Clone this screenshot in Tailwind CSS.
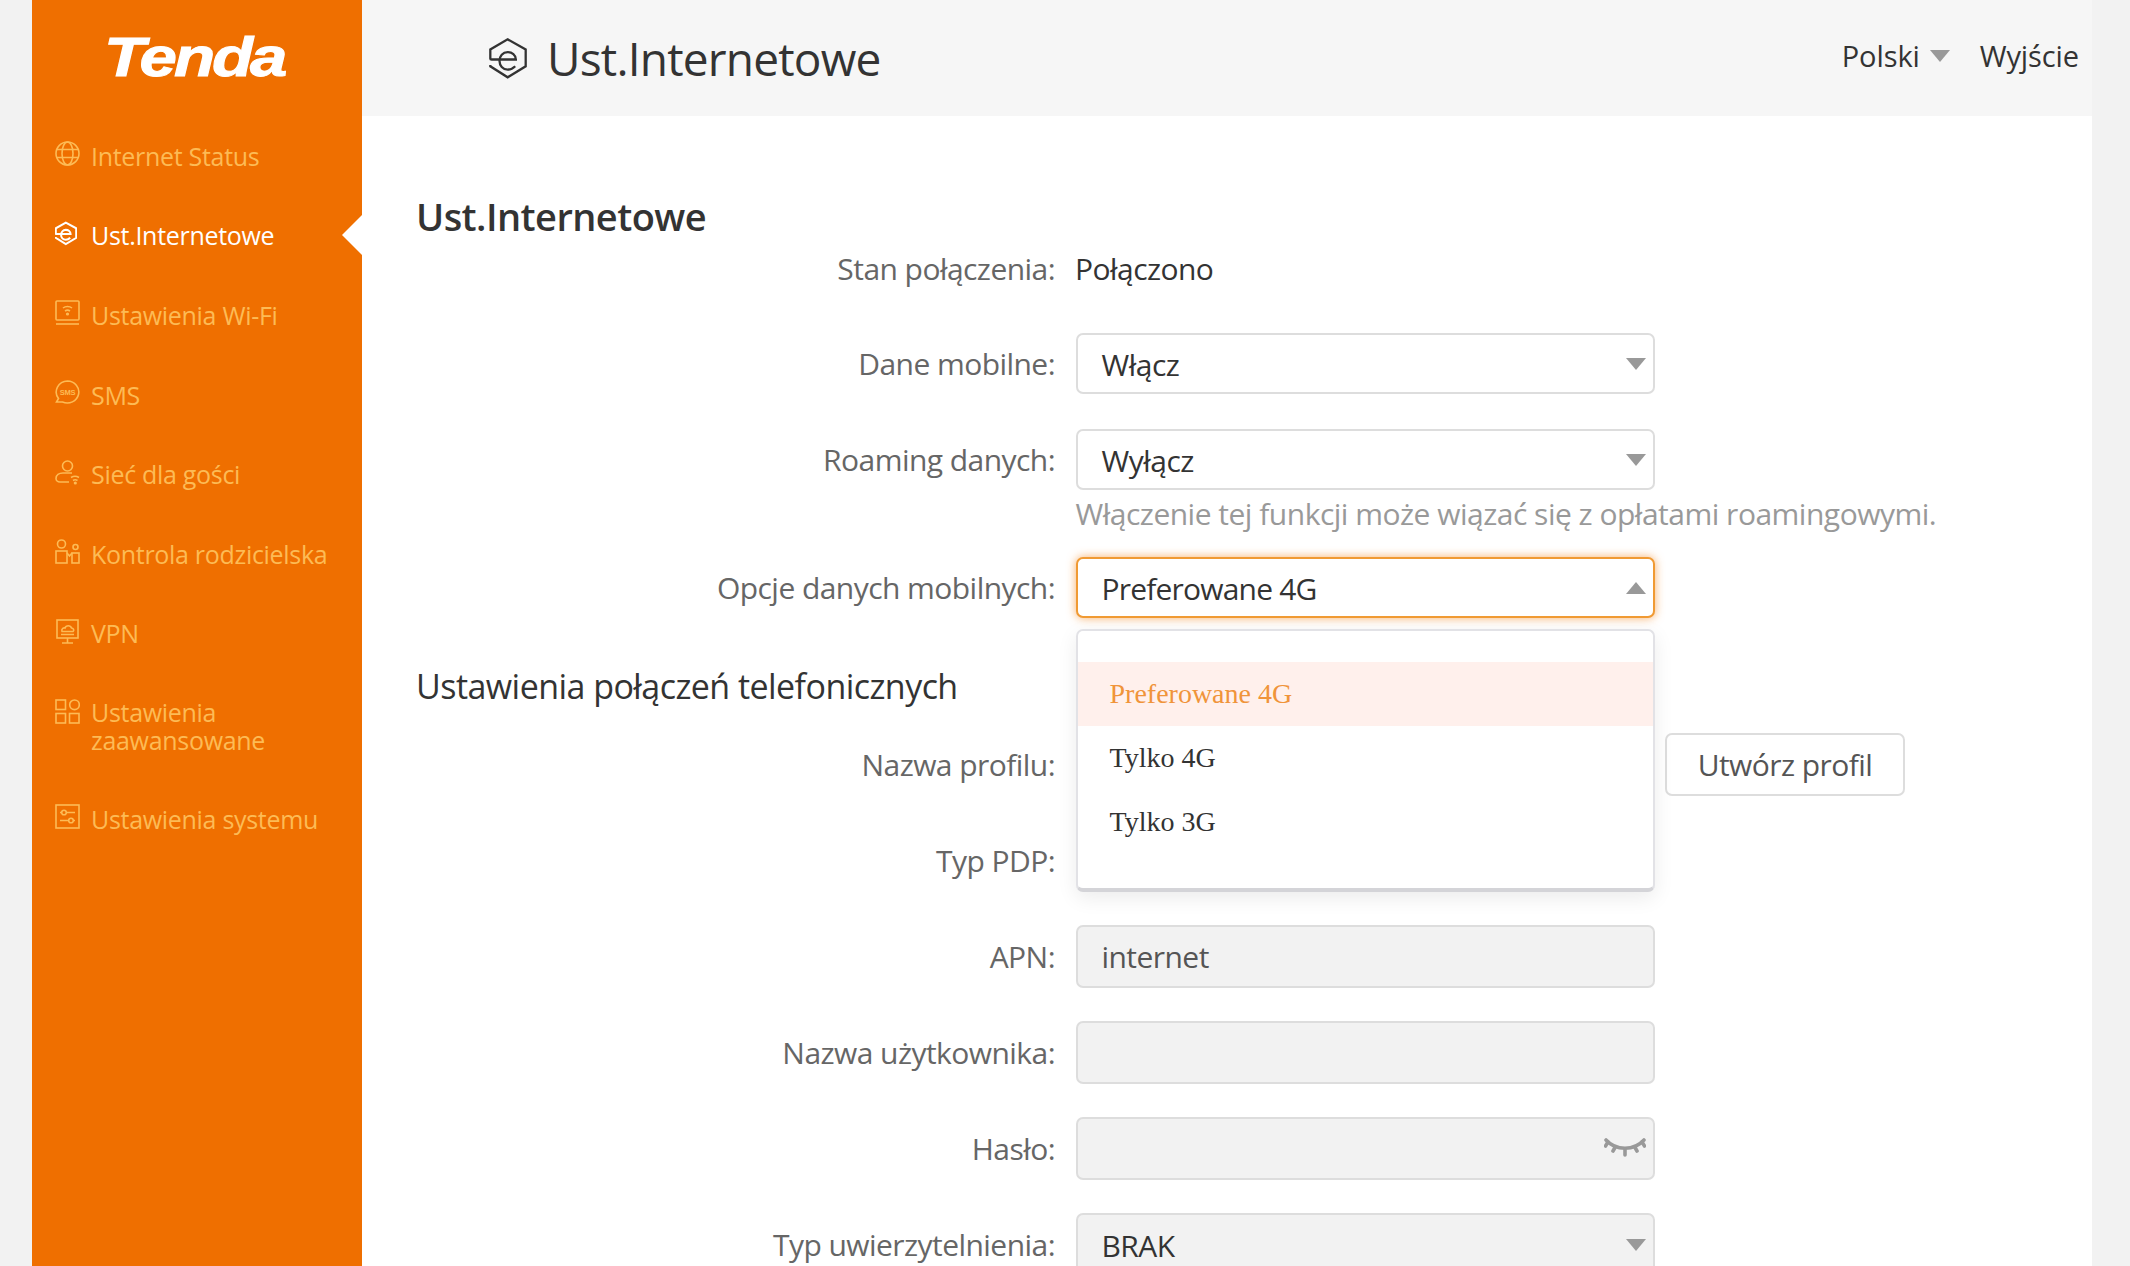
<!DOCTYPE html>
<html lang="pl">
<head>
<meta charset="utf-8">
<script src="https://cdn.jsdelivr.net/npm/@tailwindcss/browser@4"></script>
<title>Ust.Internetowe</title>
</head>
<body class="m-0 h-[1266px] overflow-hidden bg-[#f2f2f2] font-['Open_Sans',sans-serif] text-[#333]">
<div class="flex h-[1266px] pl-[32px] pr-[38px]">
  <aside class="w-[330px] shrink-0 bg-[#ef6f00] text-[#fdbb55] text-[25px] leading-[28px] tracking-[-0.3px]">
    <div class="h-[116px] flex items-center justify-center pb-[2px] pr-[5px]">
      <span class="font-['Liberation_Sans',sans-serif] font-bold italic text-white text-[56px] leading-[58px] tracking-[-2.5px] scale-x-[1.2] [-webkit-text-stroke:1px_white]">Tenda</span>
    </div>
    <nav class="flex flex-col">
      <a class="h-[79.6px] flex items-center pl-[23px] gap-[11px]"><svg class="w-[25px] h-[25px] shrink-0 -mt-[4px]" viewBox="0 0 25 25" fill="none" stroke="currentColor" stroke-width="1.6"><circle cx="12.5" cy="12.5" r="11.5"/><ellipse cx="12.5" cy="12.5" rx="5.5" ry="11.5"/><path d="M2 8.5h21M2 16.5h21"/></svg>Internet Status</a>
      <a class="relative h-[79.6px] flex items-center pl-[23px] gap-[11px] text-white"><svg class="w-[22px] h-[25px] mr-[3px] shrink-0 -mt-[4px]" viewBox="26 28 116 122" fill="none" stroke="currentColor" stroke-width="11"><path d="M30 108v4l53 33 55-33V62L83 32 30 62v28q0 2 4 2h74c0-14-12-22-25-22-15 0-25 12-25 26s10 26 25 26c9 0 17-4 23-10"/></svg>Ust.Internetowe<span class="absolute right-0 top-[19px] w-0 h-0 border-y-[20px] border-y-transparent border-r-[20px] border-r-white"></span></a>
      <a class="h-[79.6px] flex items-center pl-[23px] gap-[11px]"><svg class="w-[25px] h-[25px] shrink-0 -mt-[4px]" viewBox="0 0 25 25" fill="none" stroke="currentColor" stroke-width="1.6"><rect x="1" y="1" width="23" height="19" rx="1"/><path d="M1 24h23"/><path d="M8 8c2.500-2 6.500-2 9 0M10 11c1.500-1 3.500-1 5 0"/><circle cx="12.500" cy="14" r=".8" fill="currentColor"/></svg>Ustawienia Wi-Fi</a>
      <a class="h-[79.6px] flex items-center pl-[23px] gap-[11px]"><svg class="w-[25px] h-[25px] shrink-0 -mt-[4px]" viewBox="0 0 25 25" fill="none" stroke="currentColor" stroke-width="1.6"><path d="M12.500 1a11.500 11 0 1 1-5 21H1.500l2-3.500A11.500 11 0 0 1 12.500 1Z"/><text x="12.500" y="15" text-anchor="middle" font-size="7.500" font-weight="700" font-family="Liberation Sans" fill="currentColor" stroke="none">SMS</text></svg>SMS</a>
      <a class="h-[79.6px] flex items-center pl-[23px] gap-[11px]"><svg class="w-[25px] h-[25px] shrink-0 -mt-[4px]" viewBox="0 0 25 25" fill="none" stroke="currentColor" stroke-width="1.6"><circle cx="12.500" cy="6" r="5"/><path d="M14 22H5c-2.500 0-4-1.500-4-3.500C1 15 4 13 8 13h9"/><path d="M16 17.500c2.500-1.500 5.500-1.500 8 0M18 20.500c1.500-1 3-1 4.500 0"/><circle cx="20.300" cy="23" r=".8" fill="currentColor"/></svg>Sieć dla gości</a>
      <a class="h-[79.6px] flex items-center pl-[23px] gap-[11px]"><svg class="w-[25px] h-[25px] shrink-0 -mt-[4px]" viewBox="0 0 25 25" fill="none" stroke="currentColor" stroke-width="1.6"><circle cx="6.500" cy="5" r="4"/><rect x="1" y="12" width="11" height="12"/><circle cx="20.500" cy="8" r="2.500"/><rect x="17" y="14" width="7" height="10"/><path d="M12 14l2.500 3 2.500-3"/></svg>Kontrola rodzicielska</a>
      <a class="h-[79.6px] flex items-center pl-[23px] gap-[11px]"><svg class="w-[25px] h-[25px] shrink-0 -mt-[4px]" viewBox="0 0 25 25" fill="none" stroke="currentColor" stroke-width="1.6"><rect x="2" y="1" width="21" height="18"/><path d="M12.500 19v5M7 24h11"/><path d="M7 12.500c-1-3 2-4 3-3.500 1-3 5.500-3 6.500 0 2 0 3 2.500 1.500 3.500ZM6 15.500h13"/></svg>VPN</a>
      <a class="h-[106px] flex items-center pl-[23px] gap-[11px]"><svg class="w-[25px] h-[25px] shrink-0 self-start mt-[26px]" viewBox="0 0 25 25" fill="none" stroke="currentColor" stroke-width="1.6"><rect x="1" y="1" width="9.500" height="9.500"/><circle cx="19.500" cy="5.800" r="4.800"/><rect x="1" y="14.500" width="9.500" height="9.500"/><rect x="14.500" y="14.500" width="9.500" height="9.500"/></svg><span>Ustawienia<br>zaawansowane</span></a>
      <a class="h-[79.6px] flex items-center pl-[23px] gap-[11px]"><svg class="w-[25px] h-[25px] shrink-0 -mt-[4px]" viewBox="0 0 25 25" fill="none" stroke="currentColor" stroke-width="1.6"><rect x="1" y="1" width="23" height="23"/><path d="M5 8.500h15M5 16.500h15"/><circle cx="9" cy="8.500" r="2.300" fill="#ef6f00"/><circle cx="16" cy="16.500" r="2.300" fill="#ef6f00"/></svg>Ustawienia systemu</a>
    </nav>
  </aside>

  <div class="flex-1 min-w-0 bg-white">
    <header class="h-[116px] bg-[#f6f6f6] flex items-center pl-[127px] pr-[13px]">
      <svg class="w-[38px] h-[41px] shrink-0" viewBox="26 28 116 122" preserveAspectRatio="none" fill="none" stroke="#333" stroke-width="7"><path d="M30 108v4l53 33 55-33V62L83 32 30 62v28q0 2 4 2h74c0-14-12-22-25-22-15 0-25 12-25 26s10 26 25 26c9 0 17-4 23-10"/></svg>
      <h1 class="ml-[20px] text-[46px] leading-[56px] tracking-[-0.8px] font-normal">Ust.Internetowe</h1>
      <div class="ml-auto flex items-center text-[29px] tracking-[-0.1px] leading-[36px] -mt-[4px]">
        <span>Polski</span>
        <span class="ml-[10px] mr-[30px] w-0 h-0 border-x-[10px] border-x-transparent border-t-[12px] border-t-[#999]"></span>
        <span>Wyjście</span>
      </div>
    </header>

    <main class="relative pl-[54px] text-[30px] tracking-[-0.55px]">
      <h2 class="pt-[75px] h-[135px] text-[38px] leading-[50px] font-semibold tracking-[-0.55px]">Ust.Internetowe</h2>

      <div class="flex items-center h-[34px] mb-[48px]">
        <label class="w-[639px] text-right text-[#666]">Stan połączenia:</label>
        <span class="ml-[20px]">Połączono</span>
      </div>

      <div class="flex items-center h-[61px] mb-[35px]">
        <label class="w-[639px] text-right text-[#666]">Dane mobilne:</label>
        <div class="ml-[20.5px] w-[579px] h-[61px] border-2 border-[#ddd] rounded-[7px] bg-white flex items-center justify-between pl-[24px] pr-[7px]"><span class="pt-[2px] tracking-[-0.5px]">Włącz</span><span class="w-0 h-0 border-x-[10px] border-x-transparent border-t-[12px] border-t-[#999]"></span></div>
      </div>

      <div class="flex items-center h-[61px]">
        <label class="w-[639px] text-right text-[#666]">Roaming danych:</label>
        <div class="ml-[20.5px] w-[579px] h-[61px] border-2 border-[#ddd] rounded-[7px] bg-white flex items-center justify-between pl-[24px] pr-[7px]"><span class="pt-[2px] tracking-[-0.5px]">Wyłącz</span><span class="w-0 h-0 border-x-[10px] border-x-transparent border-t-[12px] border-t-[#999]"></span></div>
      </div>
      <p class="ml-[659.5px] h-[67px] pt-[5px] leading-[38px] text-[#999] whitespace-nowrap tracking-[-0.5px]">Włączenie tej funkcji może wiązać się z opłatami roamingowymi.</p>

      <div class="flex items-center h-[61px]">
        <label class="w-[639px] text-right text-[#666]">Opcje danych mobilnych:</label>
        <div class="ml-[20.5px] w-[579px] h-[61px] border-2 border-[#f09a33] rounded-[7px] bg-white shadow-[0_0_10px_rgba(245,140,40,0.7)] flex items-center justify-between pl-[24px] pr-[7px]"><span class="pt-[2px] tracking-[-0.8px]">Preferowane 4G</span><span class="w-0 h-0 border-x-[10px] border-x-transparent border-b-[12px] border-b-[#999]"></span></div>
      </div>

      <h3 class="mt-[45px] h-[70px] text-[34px] leading-[46px] font-normal tracking-[-0.55px]">Ustawienia połączeń telefonicznych</h3>

      <div class="flex items-center h-[63px] mb-[33px]">
        <label class="w-[639px] text-right text-[#666]">Nazwa profilu:</label>
        <div class="ml-[20.5px] w-[579px] h-[63px] shrink-0"></div>
        <button class="ml-[10.5px] w-[240px] h-[63px] border-2 border-[#ddd] rounded-[7px] bg-white text-[#555]">Utwórz profil</button>
      </div>

      <div class="flex items-center h-[63px] mb-[33px]">
        <label class="w-[639px] text-right text-[#666]">Typ PDP:</label>
      </div>

      <div class="flex items-center h-[63px] mb-[33px]">
        <label class="w-[639px] text-right text-[#666]">APN:</label>
        <div class="ml-[20.5px] w-[579px] h-[63px] border-2 border-[#ddd] rounded-[7px] bg-[#f2f2f2] flex items-center pl-[24px] text-[#555]">internet</div>
      </div>

      <div class="flex items-center h-[63px] mb-[33px]">
        <label class="w-[639px] text-right text-[#666]">Nazwa użytkownika:</label>
        <div class="ml-[20.5px] w-[579px] h-[63px] border-2 border-[#ddd] rounded-[7px] bg-[#f2f2f2]"></div>
      </div>

      <div class="flex items-center h-[63px] mb-[33px]">
        <label class="w-[639px] text-right text-[#666]">Hasło:</label>
        <div class="ml-[20.5px] w-[579px] h-[63px] border-2 border-[#ddd] rounded-[7px] bg-[#f2f2f2] flex items-center justify-end pr-[7px]">
          <svg class="w-[42px] h-[20px] -mt-[3px]" viewBox="0 0 42 20" fill="none" stroke="#999" stroke-width="3.600" stroke-linecap="round"><path d="M2 3c10 11 28 11 38 0"/><path d="M4 5 1.500 9M11 10.500 9 14M21 13v5M31 10.500l2 3.500M38 5l2.500 4"/></svg>
        </div>
      </div>

      <div class="flex items-center h-[63px]">
        <label class="w-[639px] text-right text-[#666]">Typ uwierzytelnienia:</label>
        <div class="ml-[20.5px] w-[579px] h-[63px] border-2 border-[#ddd] rounded-[7px] bg-[#f2f2f2] flex items-center justify-between pl-[24px] pr-[7px]"><span class="pt-[2px]">BRAK</span><span class="w-0 h-0 border-x-[10px] border-x-transparent border-t-[12px] border-t-[#999]"></span></div>
      </div>

      <div class="absolute left-[713.5px] top-[513px] w-[579px] h-[263px] py-[31px] border-2 border-[#e2e2e6] border-b-4 border-b-[#d4d4d8] rounded-[7px] bg-white shadow-[0_6px_20px_rgba(0,0,0,0.08)] font-['Liberation_Serif',serif] text-[28px] tracking-normal">
        <div class="h-[64px] flex items-center pl-[32px] bg-[#fff0ec] text-[#f0943a]">Preferowane 4G</div>
        <div class="h-[64px] flex items-center pl-[32px]">Tylko 4G</div>
        <div class="h-[64px] flex items-center pl-[32px]">Tylko 3G</div>
      </div>
    </main>
  </div>
</div>
</body>
</html>
